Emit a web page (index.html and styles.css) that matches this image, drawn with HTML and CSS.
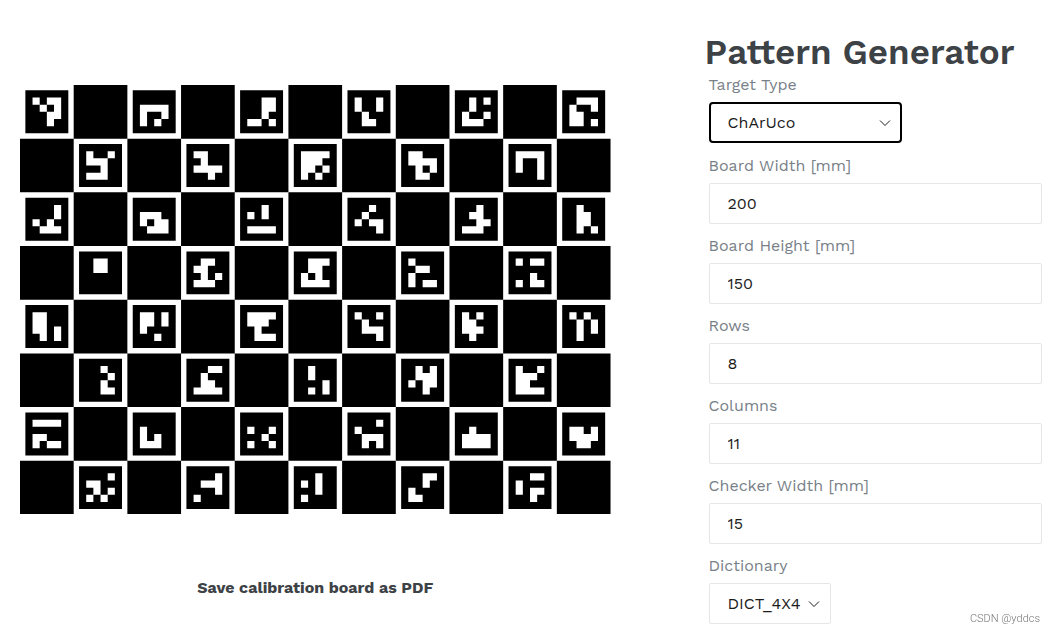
FILE: index.html
```html
<!DOCTYPE html>
<html lang="en">

<head>
    <meta charset="UTF-8">
    <meta name="viewport" content="width=device-width, initial-scale=1.0">
    <title>Pattern Generator</title>
    <link rel="stylesheet" href="styles.css">
</head>

<body>
    <main class="generator">
        <section class="preview">
            <svg id="board" class="board" viewBox="0 0 165 120" role="img" aria-label="ChArUco board"></svg>
            <a class="save" href="#board">Save calibration board as PDF</a>
        </section>

        <section class="settings">
            <h1>Pattern Generator</h1>
            <form id="pattern_form">
                <label for="target">Target Type</label>
                <div class="select select_wide">
                    <select id="target" autofocus>
                        <option>ChArUco</option>
                    </select>
                    <svg class="chevron" viewBox="0 0 12 8"><path d="M1 1.5l5 5 5-5" /></svg>
                </div>
                <label for="width">Board Width [mm]</label>
                <input type="text" id="width" value="200">
                <label for="height">Board Height [mm]</label>
                <input type="text" id="height" value="150">
                <label for="rows">Rows</label>
                <input type="text" id="rows" value="8">
                <label for="columns">Columns</label>
                <input type="text" id="columns" value="11">
                <label for="checker">Checker Width [mm]</label>
                <input type="text" id="checker" value="15">
                <label for="dictionary">Dictionary</label>
                <div class="select">
                    <select id="dictionary">
                        <option>DICT_4X4</option>
                    </select>
                    <svg class="chevron" viewBox="0 0 12 8"><path d="M1 1.5l5 5 5-5" /></svg>
                </div>
            </form>
        </section>
    </main>
    <div class="credit">CSDN @yddcs</div>

    <script src="board.js"></script>
</body>

</html>
```

FILE: styles.css
```css
* {
    box-sizing: border-box;
}

body {
    margin: 0;
    font-family: "Work Sans", Inter, sans-serif;
    font-size: 16px;
    line-height: 24px;
    color: #3d4246;
    background-color: #fff;
}

.generator {
    display: grid;
    grid-template-columns: 7fr 4fr;
    gap: 94px;
    padding: 32px 13px 9px 20px;
}

.preview {
    display: flex;
    flex-direction: column;
    align-items: center;
    gap: 62px;
    padding-top: 53px;
}

.board {
    display: block;
    width: 100%;
}

.save {
    font-weight: bold;
    color: #3d4246;
    text-decoration: none;
}

h1 {
    margin: 0;
    font-size: 35px;
    font-weight: 600;
    line-height: 41px;
    white-space: nowrap;
}

form {
    padding-left: 4px;
}

label {
    display: block;
    margin-bottom: 5px;
    color: #788188;
}

input,
select {
    display: block;
    width: 100%;
    height: 41px;
    padding: 0 18px;
    font: inherit;
    color: #1c1c1c;
    background-color: #fff;
    border: 1px solid #e6e6e6;
    border-radius: 2px;
    appearance: none;
}

input {
    margin-bottom: 10px;
}

select:focus {
    outline: 2px solid #000;
    outline-offset: -2px;
    border-radius: 4px;
}

.select {
    position: relative;
    width: 122px;
}

.select_wide {
    width: 193px;
    margin-bottom: 11px;
}

.select select {
    padding-right: 0;
}

.chevron {
    position: absolute;
    top: 17px;
    right: 11px;
    width: 12px;
    height: 8px;
    fill: none;
    stroke: #1c1c1c;
    pointer-events: none;
}

.credit {
    position: fixed;
    right: 15px;
    bottom: 6px;
    font-family: Roboto, "Liberation Sans", sans-serif;
    font-size: 11px;
    font-weight: 300;
    line-height: 16px;
    color: #777;
}
```

FILE: board.js
```javascript
// First markers of DICT_4X4, 16 bits each, read row by row
const markers = [
    0xb532, 0x0f9a, 0x332d, 0x9946, 0x549e, 0x79cd, 0x9e2e, 0xc4f2, 0xfeda, 0xcf56, 0xf991,
    0x11a7, 0x0eb7, 0x2a0f, 0x24b1, 0x263e, 0x4665, 0x6600, 0x6c5e, 0x76af, 0x868b, 0xb02b,
    0xccd5, 0xdd82, 0xfe47, 0x9471, 0xace4, 0xa554, 0x2123, 0x346f, 0x4415, 0x57b2, 0x9ecf,
    0xf0cb, 0x08ae, 0x0929, 0x1875, 0x04ff, 0x0df6, 0x1c5a, 0x1718, 0x2a28, 0x328c, 0x38b2
];
const rows = 8;
const columns = 11;
const checker = 15;
const cell = 2;

function square(x, y, size) {
    return `M${x} ${y}h${size}v${size}h${-size}z`;
}

function drawBoard() {
    let black = '';
    let white = '';
    let id = 0;

    for (let r = 0; r < rows; r++) {
        for (let c = 0; c < columns; c++) {
            const x = c * checker;
            const y = r * checker;
            if ((r + c) % 2 === 1) {
                black += square(x, y, checker);
                continue;
            }
            // marker: 6x6 cells with a black border
            black += square(x + 1.5, y + 1.5, 6 * cell);
            const bits = markers[id++];
            for (let i = 0; i < 16; i++) {
                if (bits >> (15 - i) & 1) {
                    white += square(x + 3.5 + (i % 4) * cell, y + 3.5 + Math.floor(i / 4) * cell, cell);
                }
            }
        }
    }

    document.getElementById('board').innerHTML = `<path d="${black}" fill="#000"/><path d="${white}" fill="#fff"/>`;
}

drawBoard();
```
